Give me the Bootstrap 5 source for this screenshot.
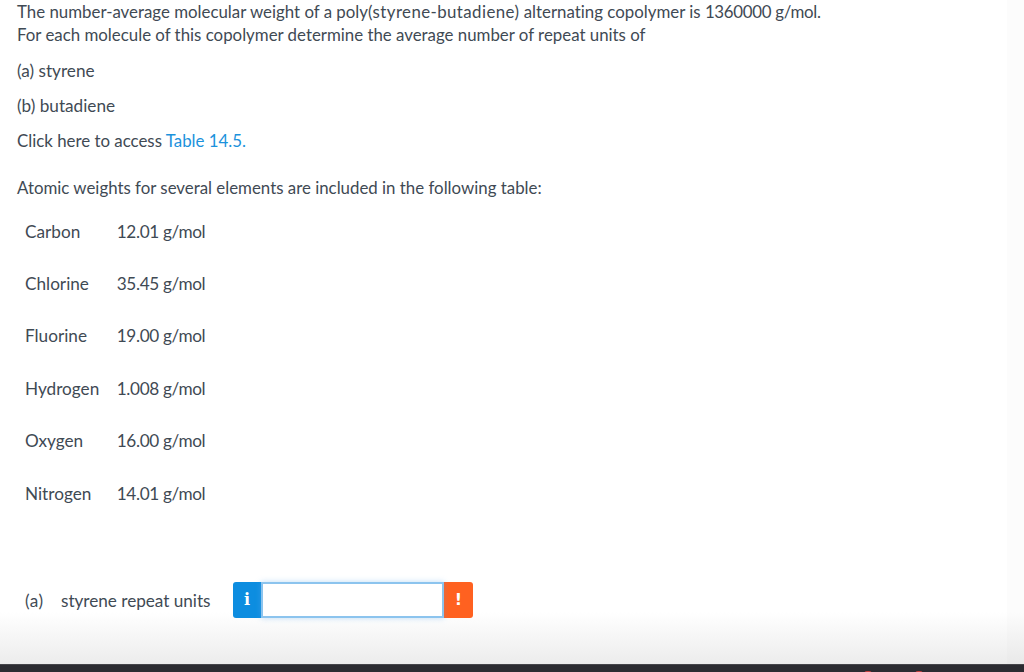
<!DOCTYPE html>
<html lang="en">
<head>
  <meta charset="UTF-8" />
  <meta name="viewport" content="width=device-width, initial-scale=1.0"/>
  <title>Question</title>
  <link href="https://cdn.jsdelivr.net/npm/bootstrap@5.3.0/dist/css/bootstrap.min.css" rel="stylesheet" />
  <style>
    html, body { height: 100%; }
    body { font-family: Lato, "Liberation Sans", sans-serif; font-size: 16.85px; font-variant-ligatures: none; color: #3f4a54; background: #fff; overflow: hidden; }
    .page-wrap { height: 672px; }
    .top-shade { height: 8px; margin-bottom: -8px; background: linear-gradient(#e6e6e6, #fff); }
    .scroll-wrap { flex: 1 1 auto; min-height: 0; background: linear-gradient(#fff 0, #fff 612px, #ececec 664px); }
    .scroll-body { flex: 1 1 auto; padding: 0 17px; }
    .side-track { width: 17px; background: rgba(0,0,0,.012); }
    .q-line { line-height: 23px; margin: 0; }
    .q-gap { margin-top: 12px; }
    .q-gap-first { margin-top: 13px; }
    .q-wide { font-size: 17.2px; }
    .q-link { color: #1b92dc; text-decoration: none; }
    .paren-run { letter-spacing: .42px; }
    .num-run { letter-spacing: -.3px; }
    .atom-intro { margin-top: 24px; line-height: 23px; }
    .atom-table { margin: 20.7px 0 0 -1px; border-collapse: collapse; font-size: 17.2px; }
    .atom-table td { padding: 0 0 29.4px 0; line-height: 23px; }
    .atom-table td:first-child { padding-left: 9px; padding-right: 17.5px; }
    .atom-table td:last-child { letter-spacing: -.36px; }
    .answer-row { margin: 50px 0 0 8px; font-size: 17.2px; }
    .answer-tag { width: 36px; letter-spacing: .5px; }
    .answer-name { width: 172px; letter-spacing: -.03px; }
    .info-box, .warn-box { height: 36px; margin-top: -2px; color: #fff; font-weight: 700; }
    .info-box { width: 28px; background: #0d8de0; border-radius: 3px 0 0 3px; font-family: "DejaVu Serif", serif; font-size: 16px; }
    .warn-box { width: 29px; background: linear-gradient(90deg, #e8683a, #ff6120 5px); border-radius: 0 3px 3px 0; font-family: "DejaVu Sans", sans-serif; font-size: 16px; }
    .answer-input { width: 183px; height: 36px; margin-top: -2px; border: 2px solid #8cc4ee; border-radius: 0; outline: 0; background: #fff; box-shadow: 0 0 6px rgba(100,170,235,.4); }
    .dock-bar { height: 8px; flex: none; background: #2b2b31; border-top: 1px solid #45454a; position: relative; }
    .dock-dot { position: absolute; top: 6px; width: 8px; height: 3px; background: #c8403f; border-radius: 4px 4px 0 0; }
  </style>
</head>
<body>

<div class="page-wrap d-flex flex-column">
  <div class="top-shade"></div>
  <div class="scroll-wrap d-flex">
    <div class="scroll-body">
      <p class="q-line">The number-average molecular weight of a poly<span class="paren-run">(styrene-butadiene)</span> alternating copolymer is <span class="num-run">1360000 g/mol.</span></p>
      <p class="q-line">For each molecule of this copolymer determine the average number of repeat units of</p>
      <p class="q-line q-gap-first q-wide">(a) styrene</p>
      <p class="q-line q-gap q-wide">(b) butadiene</p>
      <p class="q-line q-gap">Click here to access <a class="q-link" href="#">Table 14.5.</a></p>

      <p class="atom-intro mb-0">Atomic weights for several elements are included in the following table:</p>
      <table class="atom-table">
        <tr><td>Carbon</td><td>12.01 g/mol</td></tr>
        <tr><td>Chlorine</td><td>35.45 g/mol</td></tr>
        <tr><td>Fluorine</td><td>19.00 g/mol</td></tr>
        <tr><td>Hydrogen</td><td>1.008 g/mol</td></tr>
        <tr><td>Oxygen</td><td>16.00 g/mol</td></tr>
        <tr><td>Nitrogen</td><td>14.01 g/mol</td></tr>
      </table>

      <div class="answer-row d-flex align-items-center">
        <span class="answer-tag">(a)</span>
        <span class="answer-name">styrene repeat units</span>
        <span class="info-box d-flex align-items-center justify-content-center">i</span>
        <input class="answer-input" type="text" aria-label="styrene repeat units" />
        <span class="warn-box d-flex align-items-center justify-content-center">!</span>
      </div>
    </div>
    <div class="side-track ms-auto"></div>
  </div>
  <div class="dock-bar">
    <span class="dock-dot" style="left: 864px"></span>
    <span class="dock-dot" style="left: 915px"></span>
  </div>
</div>

<script src="https://cdn.jsdelivr.net/npm/bootstrap@5.3.0/dist/js/bootstrap.bundle.min.js"></script>
</body>
</html>
